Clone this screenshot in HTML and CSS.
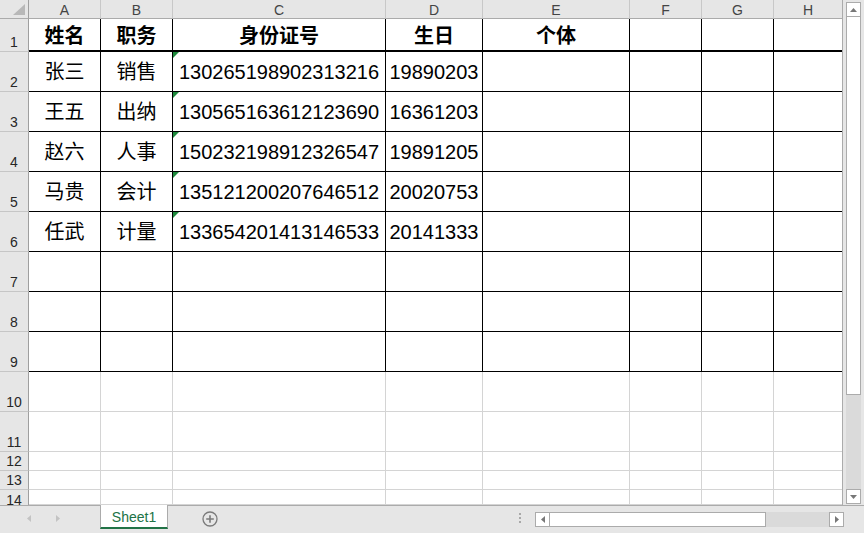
FILE: index.html
```html
<!DOCTYPE html>
<html>
<head>
<meta charset="utf-8">
<link rel="stylesheet" href="styles.css">
</head>
<body>
<div class="app">
  <div class="main">
    <div class="sheet">
      <div class="corner"><svg width="12" height="11" viewBox="0 0 12 11"><polygon points="12,0 12,11 0,11" fill="#b8b8b8"/></svg></div>
      <div class="ch">A</div><div class="ch">B</div><div class="ch">C</div><div class="ch">D</div><div class="ch">E</div><div class="ch">F</div><div class="ch">G</div><div class="ch e">H</div>

      <div class="rh">1</div>
      <div class="c hd">姓名</div><div class="c hd">职务</div><div class="c hd">身份证号</div><div class="c hd">生日</div><div class="c hd">个体</div><div class="c hd"></div><div class="c hd"></div><div class="c hd e"></div>

      <div class="rh">2</div>
      <div class="c">张三</div><div class="c">销售</div><div class="c tri">130265198902313216</div><div class="c">19890203</div><div class="c"></div><div class="c"></div><div class="c"></div><div class="c e"></div>

      <div class="rh">3</div>
      <div class="c">王五</div><div class="c">出纳</div><div class="c tri">130565163612123690</div><div class="c">16361203</div><div class="c"></div><div class="c"></div><div class="c"></div><div class="c e"></div>

      <div class="rh">4</div>
      <div class="c">赵六</div><div class="c">人事</div><div class="c tri">150232198912326547</div><div class="c">19891205</div><div class="c"></div><div class="c"></div><div class="c"></div><div class="c e"></div>

      <div class="rh">5</div>
      <div class="c">马贵</div><div class="c">会计</div><div class="c tri">135121200207646512</div><div class="c">20020753</div><div class="c"></div><div class="c"></div><div class="c"></div><div class="c e"></div>

      <div class="rh">6</div>
      <div class="c">任武</div><div class="c">计量</div><div class="c tri">133654201413146533</div><div class="c">20141333</div><div class="c"></div><div class="c"></div><div class="c"></div><div class="c e"></div>

      <div class="rh">7</div>
      <div class="c"></div><div class="c"></div><div class="c"></div><div class="c"></div><div class="c"></div><div class="c"></div><div class="c"></div><div class="c e"></div>

      <div class="rh">8</div>
      <div class="c"></div><div class="c"></div><div class="c"></div><div class="c"></div><div class="c"></div><div class="c"></div><div class="c"></div><div class="c e"></div>

      <div class="rh">9</div>
      <div class="c"></div><div class="c"></div><div class="c"></div><div class="c"></div><div class="c"></div><div class="c"></div><div class="c"></div><div class="c e"></div>

      <div class="rh">10</div>
      <div class="g"></div><div class="g"></div><div class="g"></div><div class="g"></div><div class="g"></div><div class="g"></div><div class="g"></div><div class="g e"></div>

      <div class="rh">11</div>
      <div class="g"></div><div class="g"></div><div class="g"></div><div class="g"></div><div class="g"></div><div class="g"></div><div class="g"></div><div class="g e"></div>

      <div class="rh">12</div>
      <div class="g"></div><div class="g"></div><div class="g"></div><div class="g"></div><div class="g"></div><div class="g"></div><div class="g"></div><div class="g e"></div>

      <div class="rh">13</div>
      <div class="g"></div><div class="g"></div><div class="g"></div><div class="g"></div><div class="g"></div><div class="g"></div><div class="g"></div><div class="g e"></div>

      <div class="rh cut">14</div>
      <div class="g"></div><div class="g"></div><div class="g"></div><div class="g"></div><div class="g"></div><div class="g"></div><div class="g"></div><div class="g e"></div>
    </div>
    <div class="vscroll">
      <div class="vtrack">
        <div class="sbtn"><svg width="7" height="4" viewBox="0 0 7 4"><polygon points="0,4 7,4 3.5,0" fill="#777"/></svg></div>
        <div class="vthumb"></div>
        <div class="vfill"></div>
        <div class="sbtn"><svg width="7" height="4" viewBox="0 0 7 4"><polygon points="0,0 7,0 3.5,4" fill="#777"/></svg></div>
      </div>
    </div>
  </div>
  <div class="tabbar">
    <div class="nav">
      <svg width="4" height="7" viewBox="0 0 4 7"><polygon points="4,0 4,7 0,3.5" fill="#c3c3c3"/></svg>
      <svg width="4" height="7" viewBox="0 0 4 7"><polygon points="0,0 0,7 4,3.5" fill="#c3c3c3"/></svg>
    </div>
    <div class="tab">Sheet1</div>
    <div class="add"><svg width="16" height="16" viewBox="0 0 16 16"><circle cx="8" cy="8" r="7" fill="none" stroke="#7a7a7a" stroke-width="1.3"/><path d="M8 4.2V11.8M4.2 8H11.8" stroke="#7a7a7a" stroke-width="1.6"/></svg></div>
    <div class="spacer"></div>
    <div class="dots"><span></span><span></span><span></span></div>
    <div class="hscroll">
      <div class="sbtn"><svg width="4" height="7" viewBox="0 0 4 7"><polygon points="4,0 4,7 0,3.5" fill="#777"/></svg></div>
      <div class="hthumb"></div>
      <div class="hfill"></div>
      <div class="sbtn"><svg width="4" height="7" viewBox="0 0 4 7"><polygon points="0,0 0,7 4,3.5" fill="#777"/></svg></div>
    </div>
  </div>
</div>
</body>
</html>
```
FILE: styles.css
```css
html, body {
  margin: 0;
  padding: 0;
  background: #e6e6e6;
}
body {
  width: 864px;
  height: 533px;
  overflow: hidden;
  font-family: "Liberation Sans", "Noto Sans CJK SC", sans-serif;
}
.app {
  display: flex;
  flex-direction: column;
  width: 864px;
  height: 533px;
}
.main {
  display: flex;
  height: 505px;
}
.sheet {
  box-sizing: border-box;
  width: 843px;
  height: 505px;
  display: grid;
  grid-template-columns: 29px 72px 72px 213px 97px 147px 72px 72px 68px;
  grid-template-rows: 19px 33px repeat(10, 40px) 19px 19px 15px;
  border-right: 1px solid #ababab;
  background: #fff;
  overflow: hidden;
}
.sheet > div {
  box-sizing: border-box;
  display: flex;
  align-items: center;
  justify-content: center;
  overflow: hidden;
}
.corner {
  background: #e6e6e6;
  border-right: 1px solid #9f9f9f;
  border-bottom: 1px solid #ababab;
  align-items: flex-end !important;
  justify-content: flex-end !important;
  padding: 0 3px 3px 0;
}
.ch {
  background: #e6e6e6;
  border-bottom: 1px solid #ababab;
  border-right: 1px solid #c8c8c8;
  color: #444;
  font-size: 14px;
  line-height: 1;
  padding-top: 1px;
}
.rh {
  background: #e6e6e6;
  border-right: 1px solid #9f9f9f;
  border-bottom: 1px solid #c6c6c6;
  color: #262626;
  font-size: 14px;
  line-height: 1;
  align-items: flex-end !important;
  padding-bottom: 2px;
}
.rh.cut {
  align-items: flex-start !important;
  padding: 3px 0 0 0;
  border-bottom: none;
}
.c {
  border-right: 1px solid #000;
  border-bottom: 1px solid #000;
  color: #000;
  font-size: 20px;
  line-height: 24px;
  white-space: nowrap;
  position: relative;
}
.hd {
  border-bottom: 2px solid #000;
  font-weight: bold;
  padding-top: 3px;
}
.g {
  border-right: 1px solid #d4d4d4;
  border-bottom: 1px solid #d4d4d4;
}
.sheet > .e {
  border-right: none;
}
.tri::before {
  content: "";
  position: absolute;
  top: 0;
  left: 0;
  width: 0;
  height: 0;
  border-top: 6px solid #1e8a3c;
  border-right: 6px solid transparent;
}
.vscroll {
  width: 21px;
  height: 505px;
  background: #e6e6e6;
  padding: 2px 3px 0 3px;
  box-sizing: border-box;
}
.vtrack {
  height: 502px;
  width: 15px;
  background: #dadada;
  display: flex;
  flex-direction: column;
}
.sbtn {
  box-sizing: border-box;
  width: 15px;
  height: 15px;
  background: #fff;
  border: 1px solid #ababab;
  display: flex;
  align-items: center;
  justify-content: center;
  flex: none;
}
.vthumb {
  box-sizing: border-box;
  height: 378px;
  background: #fff;
  border: 1px solid #ababab;
  border-top: none;
}
.vfill {
  flex: 1;
}
.tabbar {
  box-sizing: border-box;
  height: 28px;
  border-top: 1px solid #ababab;
  display: flex;
  align-items: flex-start;
  background: #e6e6e6;
}
.nav {
  width: 100px;
  height: 24px;
  display: flex;
  align-items: center;
  gap: 25px;
  padding-left: 27px;
  box-sizing: border-box;
  padding-top: 1px;
}
.tab {
  box-sizing: border-box;
  width: 68px;
  height: 24px;
  margin-top: -1px;
  background: #fff;
  border-left: 1px solid #ababab;
  border-right: 1px solid #ababab;
  border-bottom: 2px solid #217346;
  color: #217346;
  font-size: 14px;
  display: flex;
  align-items: center;
  justify-content: center;
  padding-top: 1px;
}
.add {
  margin-left: 34px;
  margin-top: 5px;
  display: flex;
}
.spacer {
  flex: 1;
}
.dots {
  display: flex;
  flex-direction: column;
  gap: 2px;
  margin-top: 7px;
  margin-right: 14px;
}
.dots span {
  display: block;
  width: 2px;
  height: 2px;
  background: #a8a8a8;
}
.hscroll {
  display: flex;
  width: 309px;
  height: 15px;
  margin-top: 6px;
  margin-right: 20px;
  background: #dadada;
}
.hthumb {
  box-sizing: border-box;
  width: 216px;
  height: 15px;
  background: #fff;
  border: 1px solid #ababab;
  border-left: none;
}
.hfill {
  flex: 1;
}
```
